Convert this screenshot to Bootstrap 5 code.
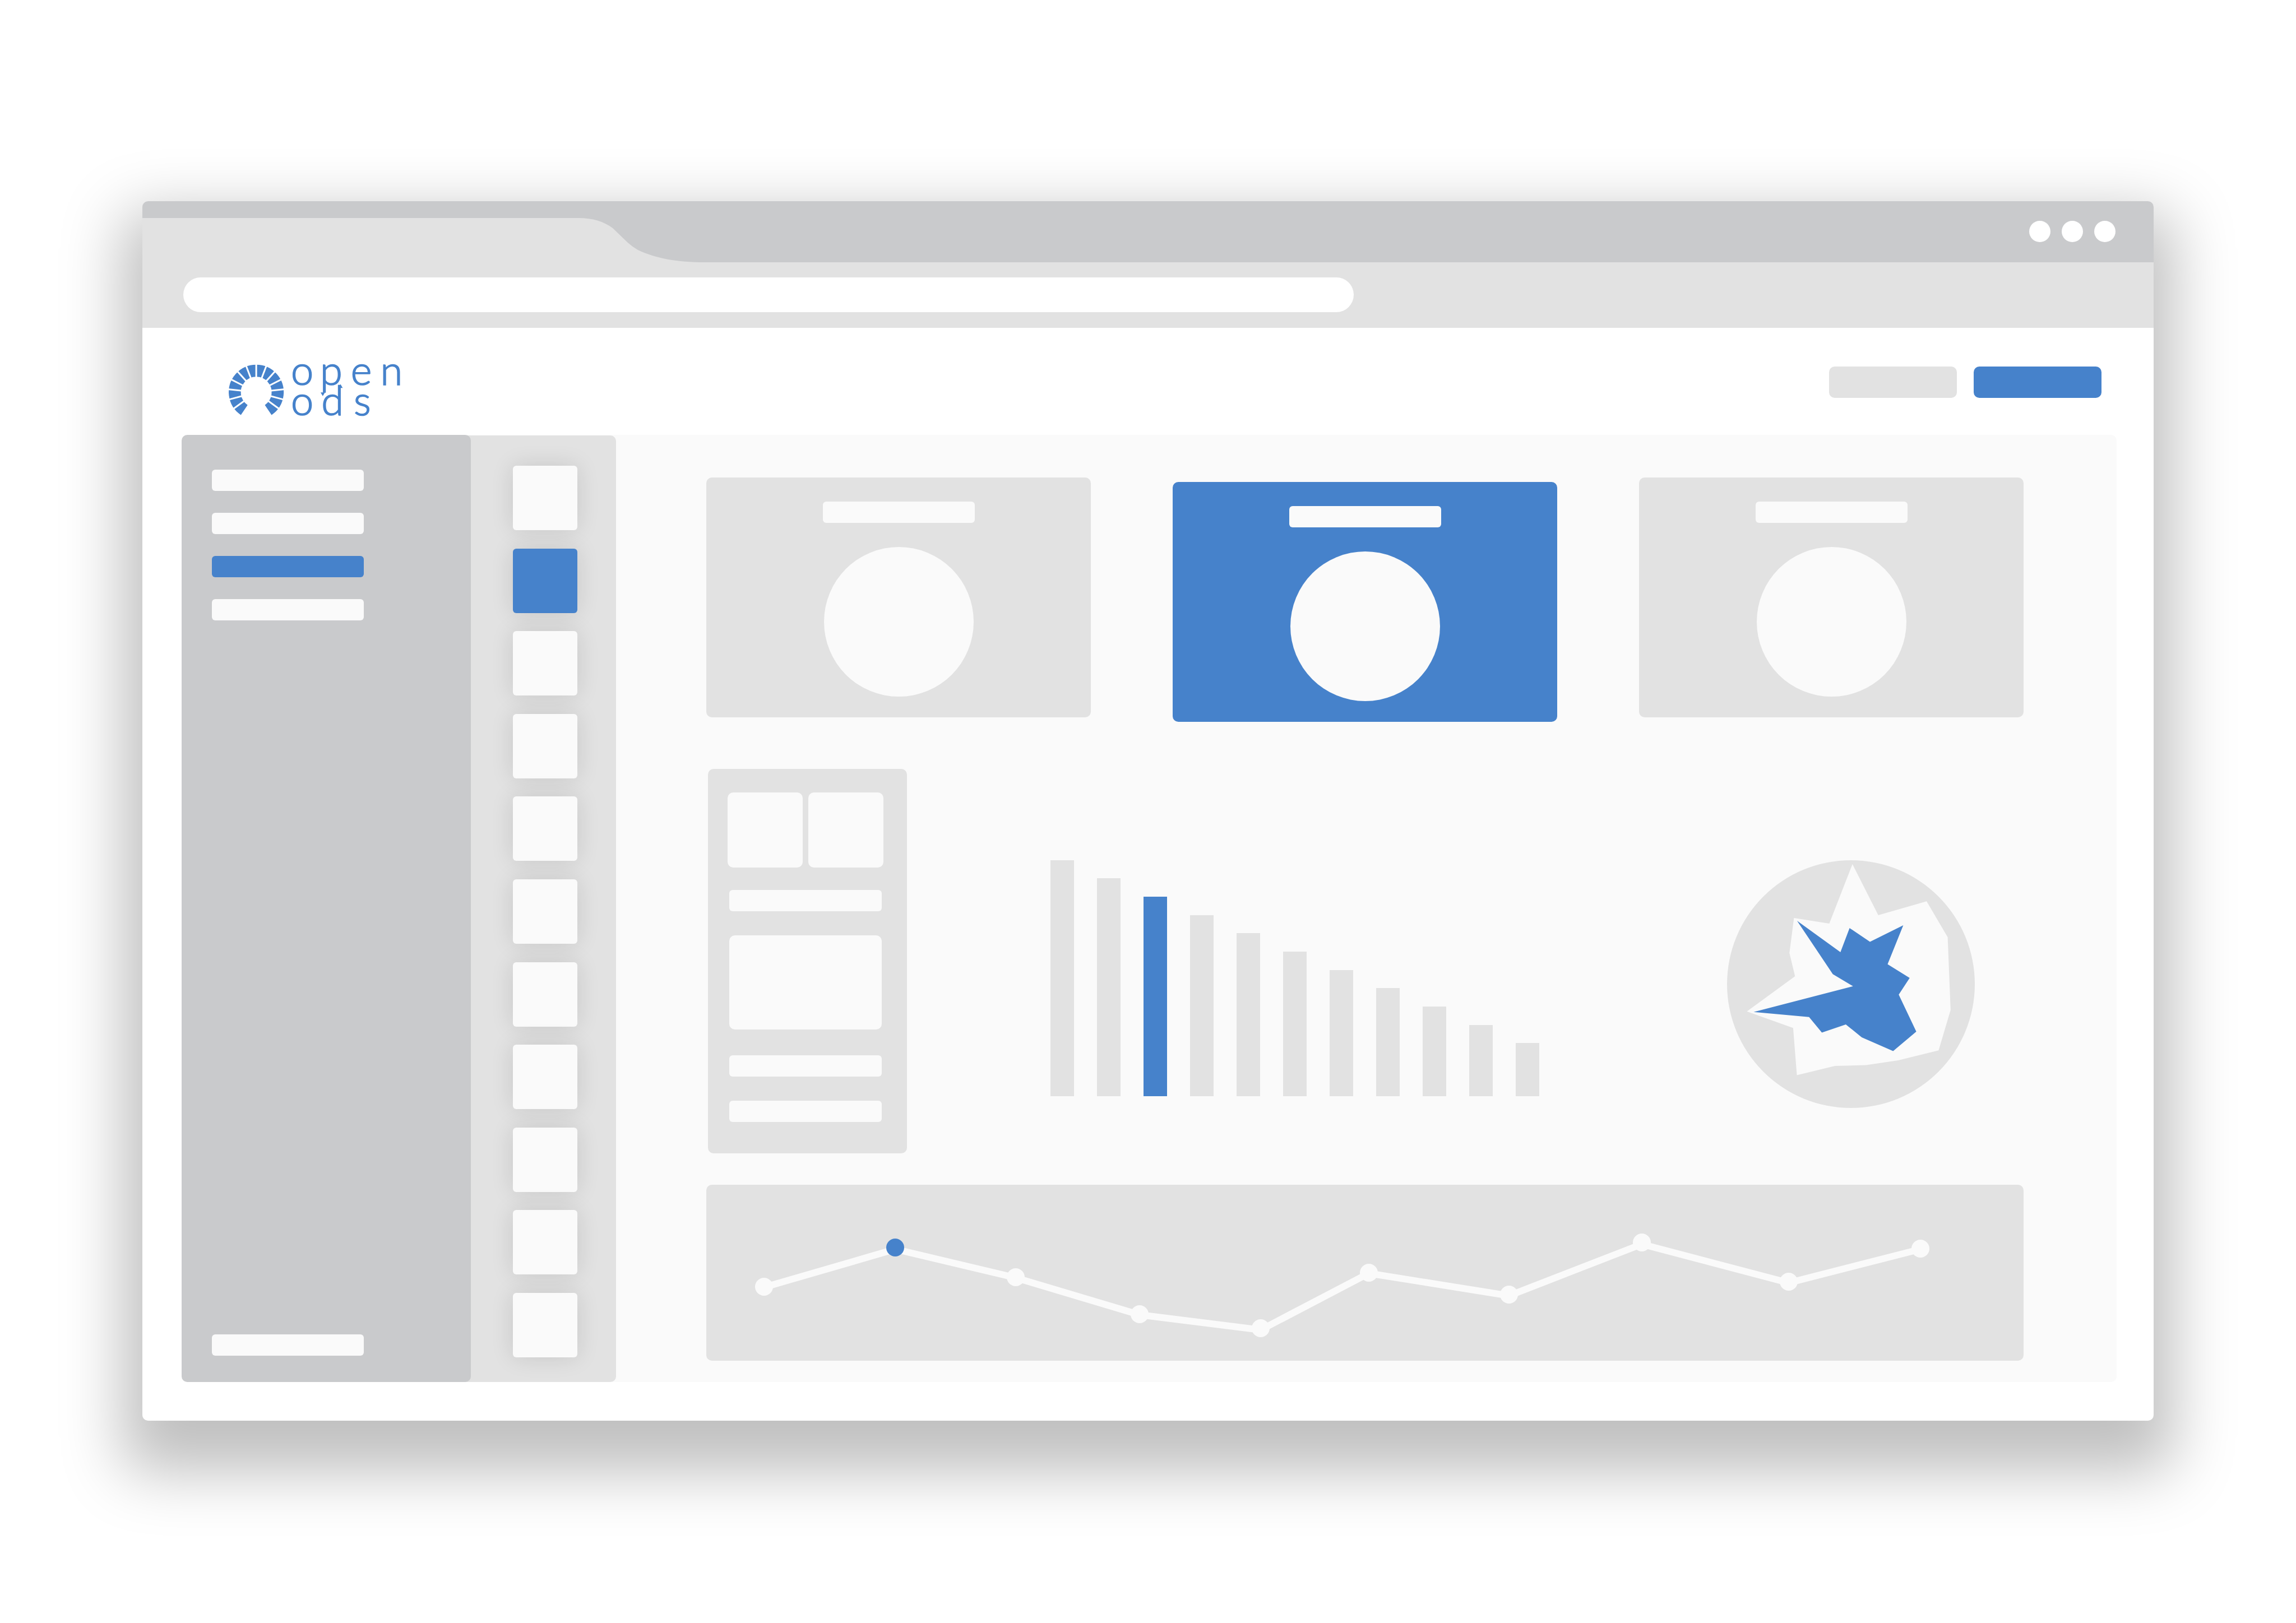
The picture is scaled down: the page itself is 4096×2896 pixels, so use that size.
<!DOCTYPE html>
<html lang="en">
<head>
<meta charset="utf-8">
<meta name="viewport" content="width=device-width, initial-scale=1">
<title>open ods</title>
<link href="https://cdn.jsdelivr.net/npm/bootstrap@5.3.0/dist/css/bootstrap.min.css" rel="stylesheet">
<style>
:root { --ods-blue: #4682cb; --ods-dark: #c9cacc; --ods-light: #e2e2e2; --ods-pale: #fafafa; }
body { background: #fff; padding: 359px 254px 361px; font-family: Lato, sans-serif; }
.app-window { background: #fff; border-radius: 10px; padding-bottom: 69px; box-shadow: 0 56px 110px 36px rgba(0,0,0,.25); }
.bg-pale { background: var(--ods-pale); }
.bg-light-grey { background: var(--ods-light); }
.bg-dark-grey { background: var(--ods-dark); }
.bg-blue { background: var(--ods-blue); }
.title-strip { border-radius: 10px 10px 0 0; padding-right: 68px; height: 109px; }
.title-strip .tab-shape { width: 1003px; height: 79px; }
.win-dots { gap: 20px; padding-top: 35px; }
.win-dot { width: 38px; height: 38px; }
.address-row { padding: 27px 73px 28px; }
.address-box { width: 2088px; max-width: 100%; height: 62px; padding: 0 31px; font-size: 28px; }
.site-header { height: 191px; padding: 65px 93px 0 154px; }
.logo-art { width: 307px; height: 92px; }
.header-actions { gap: 30px; }
.header-btn { width: 228px; height: 56px; border-radius: 10px; }
.work-area { margin: 0 66px 0 70px; border-radius: 10px; }
.side-nav { width: 516px; border-radius: 10px; padding: 62px 54px 47px; gap: 39px; z-index: 1; }
.line-bar { display: block; width: 271px; height: 38px; border-radius: 6px; }
.tool-strip { width: 279px; margin: 1px 0 0 -20px; padding: 54px 0 44px 25px; border-radius: 10px; }
.tool-btn { width: 115px; height: 115px; border-radius: 6px; box-shadow: 0 0 40px rgba(0,0,0,.12); }
.board { padding: 76px 166px 38px 161px; min-width: 0; }
.tile-row { gap: 146px; margin-bottom: 84px; }
.tile { flex: 1 1 0; height: 428px; border-radius: 10px; padding-top: 43px; gap: 43px; }
.tile.bg-blue { margin-top: 8px; }
.tile-disc { width: 267px; height: 267px; }
.middle-row { padding: 0 87px 0 3px; margin-bottom: 56px; }
.detail-panel { width: 355px; height: 686px; border-radius: 10px; padding: 42px 42px 0 35px; gap: 43px; }
.thumb-pair { gap: 10px; margin-bottom: -3px; }
.thumb { flex: 1; height: 134px; border-radius: 10px; }
.detail-panel .line-bar, .detail-panel .big-block { width: auto; margin-left: 3px; margin-right: 3px; }
.detail-panel .big-block { height: 168px; border-radius: 10px; margin-bottom: 3px; }
.bar-chart { flex: 1; height: 421px; margin: 163px 335px 0 256px; }
.bar-item { width: 42px; }
.radar { width: 442px; height: 442px; margin-top: 163px; }
.trend-panel { border-radius: 10px; }
</style>
<script src="https://cdn.jsdelivr.net/npm/bootstrap@5.3.0/dist/js/bootstrap.bundle.min.js"></script>
</head>
<body>
<div class="app-window">
  <div class="title-strip bg-dark-grey d-flex justify-content-between">
    <svg class="tab-shape align-self-end" viewBox="0 0 1003 79" aria-hidden="true"><path fill="#e2e2e2" d="M0 0H778C803 0 823 6 839 18L866 44Q875 52 884 57C915 72 955 79 1003 79H0Z"/></svg>
    <div class="win-dots d-flex">
      <span class="win-dot rounded-circle bg-white"></span>
      <span class="win-dot rounded-circle bg-white"></span>
      <span class="win-dot rounded-circle bg-white"></span>
    </div>
  </div>
  <div class="address-row bg-light-grey">
    <input type="text" class="address-box d-block border-0 rounded-pill bg-white" aria-label="Address">
  </div>

  <header class="site-header d-flex justify-content-between align-items-start">
    <a href="#" class="d-block" aria-label="open ods">
      <svg class="logo-art d-block" viewBox="162 140 1114 334" overflow="visible">
        <path d="M262.300 436.200A139 139 0 1 1 417.700 436.200" fill="none" stroke="#4682cb" stroke-width="78"/>
        <g stroke="#fff" stroke-width="11">
          <path d="M340 135V232"/>
          <path d="M340 135V232" transform="rotate(21 340 321)"/>
          <path d="M340 135V232" transform="rotate(42 340 321)"/>
          <path d="M340 135V232" transform="rotate(63 340 321)"/>
          <path d="M340 135V232" transform="rotate(84 340 321)"/>
          <path d="M340 135V232" transform="rotate(105 340 321)"/>
          <path d="M340 135V232" transform="rotate(126 340 321)"/>
          <path d="M340 135V232" transform="rotate(-21 340 321)"/>
          <path d="M340 135V232" transform="rotate(-42 340 321)"/>
          <path d="M340 135V232" transform="rotate(-63 340 321)"/>
          <path d="M340 135V232" transform="rotate(-84 340 321)"/>
          <path d="M340 135V232" transform="rotate(-105 340 321)"/>
          <path d="M340 135V232" transform="rotate(-126 340 321)"/>
        </g>
        <g fill="#4682cb" stroke="#4682cb" stroke-width="6" font-family="Lato, sans-serif" font-weight="300" font-size="262" text-anchor="middle">
          <text y="274" x="638 826 1021 1216">open</text>
          <text y="472" x="638 834 1027">ods</text>
        </g>
        <path fill="#4682cb" d="M757 322H785L771 346ZM872 293H900L886 269Z"/>
      </svg>
    </a>
    <div class="header-actions d-flex mt-1">
      <button type="button" class="btn header-btn border-0 bg-light-grey" aria-label="Secondary action"></button>
      <button type="button" class="btn header-btn border-0 bg-blue" aria-label="Primary action"></button>
    </div>
  </header>

  <div class="work-area bg-pale d-flex">
    <nav class="side-nav bg-dark-grey d-flex flex-column flex-shrink-0 position-relative" aria-label="Sections">
      <a href="#" class="line-bar bg-pale" aria-label="Section 1"></a>
      <a href="#" class="line-bar bg-pale" aria-label="Section 2"></a>
      <a href="#" class="line-bar bg-blue" aria-label="Section 3" aria-current="page"></a>
      <a href="#" class="line-bar bg-pale" aria-label="Section 4"></a>
      <a href="#" class="line-bar bg-pale mt-auto" aria-label="Settings"></a>
    </nav>
    <div class="tool-strip bg-light-grey d-flex flex-column align-items-center justify-content-between flex-shrink-0">
      <button type="button" class="btn tool-btn border-0 bg-pale" aria-label="Tool 1"></button>
      <button type="button" class="btn tool-btn border-0 bg-blue" aria-label="Tool 2"></button>
      <button type="button" class="btn tool-btn border-0 bg-pale" aria-label="Tool 3"></button>
      <button type="button" class="btn tool-btn border-0 bg-pale" aria-label="Tool 4"></button>
      <button type="button" class="btn tool-btn border-0 bg-pale" aria-label="Tool 5"></button>
      <button type="button" class="btn tool-btn border-0 bg-pale" aria-label="Tool 6"></button>
      <button type="button" class="btn tool-btn border-0 bg-pale" aria-label="Tool 7"></button>
      <button type="button" class="btn tool-btn border-0 bg-pale" aria-label="Tool 8"></button>
      <button type="button" class="btn tool-btn border-0 bg-pale" aria-label="Tool 9"></button>
      <button type="button" class="btn tool-btn border-0 bg-pale" aria-label="Tool 10"></button>
      <button type="button" class="btn tool-btn border-0 bg-pale" aria-label="Tool 11"></button>
    </div>

    <main class="board flex-grow-1">
      <div class="tile-row d-flex align-items-start">
        <section class="tile bg-light-grey d-flex flex-column align-items-center">
          <span class="line-bar bg-pale"></span><span class="tile-disc rounded-circle bg-pale"></span>
        </section>
        <section class="tile bg-blue d-flex flex-column align-items-center">
          <span class="line-bar bg-pale"></span><span class="tile-disc rounded-circle bg-pale"></span>
        </section>
        <section class="tile bg-light-grey d-flex flex-column align-items-center">
          <span class="line-bar bg-pale"></span><span class="tile-disc rounded-circle bg-pale"></span>
        </section>
      </div>

      <div class="middle-row d-flex align-items-start">
        <section class="detail-panel bg-light-grey d-flex flex-column flex-shrink-0">
          <div class="thumb-pair d-flex"><span class="thumb bg-pale"></span><span class="thumb bg-pale"></span></div>
          <span class="line-bar bg-pale"></span>
          <span class="big-block bg-pale"></span>
          <span class="line-bar bg-pale"></span>
          <span class="line-bar bg-pale"></span>
        </section>
        <div class="bar-chart d-flex align-items-end justify-content-between" role="img" aria-label="Bar chart">
          <span class="bar-item bg-light-grey" style="height:421px"></span>
          <span class="bar-item bg-light-grey" style="height:389px"></span>
          <span class="bar-item bg-blue" style="height:356px"></span>
          <span class="bar-item bg-light-grey" style="height:323px"></span>
          <span class="bar-item bg-light-grey" style="height:291px"></span>
          <span class="bar-item bg-light-grey" style="height:258px"></span>
          <span class="bar-item bg-light-grey" style="height:225px"></span>
          <span class="bar-item bg-light-grey" style="height:193px"></span>
          <span class="bar-item bg-light-grey" style="height:160px"></span>
          <span class="bar-item bg-light-grey" style="height:127px"></span>
          <span class="bar-item bg-light-grey" style="height:95px"></span>
        </div>
        <svg class="radar flex-shrink-0" viewBox="0 0 442 442" role="img" aria-label="Radar chart">
          <circle cx="221" cy="221" r="221" fill="#e2e2e2"/>
          <path fill="#fafafa" d="M223.700 7L269.800 98L356 73.300L393.600 137.300L398.800 267.200L377.400 339.200L305.500 356.900L248 365.600L192.400 367L124.600 383.600L117.900 299.200L35.400 269.700L121.300 207.100L111.300 165.400L119.400 102.900L182.400 112.900Z"/>
          <path fill="#4682cb" d="M124.900 108.100L202.300 164L218.600 120.900L255 145.600L314.400 116.100L286.400 185.600L325.800 209.900L306.300 239.800L337.600 305.800L296.300 340.600L240.300 315.900L211.900 292.900L169.200 307.500L146.300 279.700L47.500 270.700L224.800 224.800L188.700 203.300Z"/>
        </svg>
      </div>

      <section class="trend-panel bg-light-grey">
        <svg class="d-block w-100" viewBox="0 0 2350 314" role="img" aria-label="Trend line">
          <polyline fill="none" stroke="#fafafa" stroke-width="12" points="103,183 337,115 552,166 773,232 989,259 1182,158 1432,198 1669,106 1931,175 2166,115"/>
          <g fill="#fafafa">
            <circle cx="103" cy="182" r="16"/><circle cx="552" cy="165" r="16"/><circle cx="773" cy="231" r="16"/><circle cx="989" cy="256" r="16"/><circle cx="1182" cy="157" r="16"/><circle cx="1432" cy="196" r="16"/><circle cx="1669" cy="103" r="16"/><circle cx="1931" cy="173" r="16"/><circle cx="2166" cy="114" r="16"/>
          </g>
          <circle cx="337" cy="112" r="16" fill="#4682cb"/>
        </svg>
      </section>
    </main>
  </div>
</div>
</body>
</html>
